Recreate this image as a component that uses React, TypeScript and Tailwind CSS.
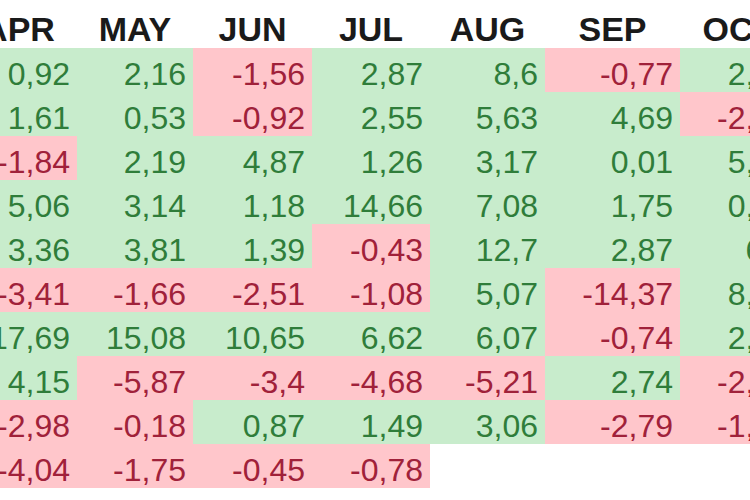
import React from "react";

type Cell = string | null;

const months = ["APR", "MAY", "JUN", "JUL", "AUG", "SEP", "OCT"];
const widths = ["w-[116px]", "w-[116px]", "w-[119px]", "w-[118px]", "w-[115px]", "w-[135px]", "w-[117px]"];

const rows: Cell[][] = [
  ["0,92", "2,16", "-1,56", "2,87", "8,6", "-0,77", "2,35"],
  ["1,61", "0,53", "-0,92", "2,55", "5,63", "4,69", "-2,14"],
  ["-1,84", "2,19", "4,87", "1,26", "3,17", "0,01", "5,42"],
  ["5,06", "3,14", "1,18", "14,66", "7,08", "1,75", "0,93"],
  ["3,36", "3,81", "1,39", "-0,43", "12,7", "2,87", "6,1"],
  ["-3,41", "-1,66", "-2,51", "-1,08", "5,07", "-14,37", "8,26"],
  ["17,69", "15,08", "10,65", "6,62", "6,07", "-0,74", "2,58"],
  ["4,15", "-5,87", "-3,4", "-4,68", "-5,21", "2,74", "-2,33"],
  ["-2,98", "-0,18", "0,87", "1,49", "3,06", "-2,79", "-1,62"],
  ["-4,04", "-1,75", "-0,45", "-0,78", null, null, null],
];

function ValueCell({ value, width }: { value: Cell; width: string }) {
  if (value === null) {
    return <div className={`${width} h-[44px] shrink-0 bg-white`} />;
  }
  const negative = value.startsWith("-");
  return (
    <div
      className={`${width} h-[44px] shrink-0 pr-[7px] pt-[6px] text-right text-[32px] leading-[40px] whitespace-nowrap ${
        negative ? "bg-[#ffc6cb] text-[#a0213a]" : "bg-[#c8eccc] text-[#2f7d3a]"
      }`}
    >
      {value}
    </div>
  );
}

export default function App() {
  return (
    <div
      className="w-[750px] h-[500px] overflow-hidden bg-white"
      style={{ fontFamily: '"Liberation Sans", Arial, sans-serif' }}
    >
      <div className="-ml-[39px] flex flex-col">
        <div className="flex h-[48px]">
          {months.map((m, i) => (
            <div
              key={m}
              className={`${widths[i]} shrink-0 pt-[11px] text-center text-[34px] font-bold leading-[37px] text-[#1a1a1a]`}
            >
              {m}
            </div>
          ))}
        </div>
        {rows.map((row, r) => (
          <div key={r} className="flex">
            {row.map((v, i) => (
              <ValueCell key={i} value={v} width={widths[i]} />
            ))}
          </div>
        ))}
      </div>
    </div>
  );
}
